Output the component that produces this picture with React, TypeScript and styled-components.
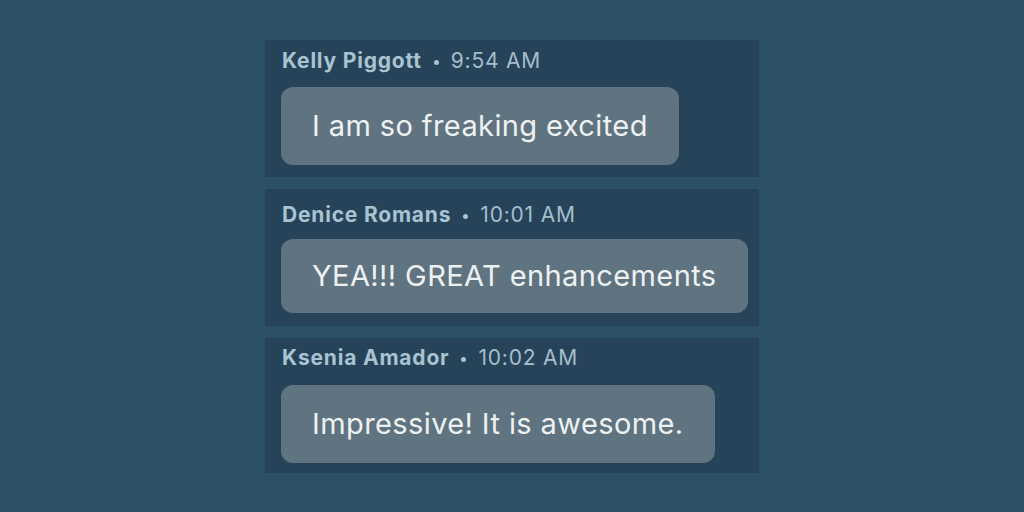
import React from "react";
import styled, { createGlobalStyle } from "styled-components";

const GlobalStyle = createGlobalStyle`
  html, body {
    margin: 0;
    padding: 0;
    background: #2c5166;
  }
  body {
    font-family: Inter, "Noto Sans", sans-serif;
    -webkit-font-smoothing: antialiased;
  }
`;

type Message = {
  name: string;
  time: string;
  text: string;
  top: number;
  bottom: number;
  gap: number;
  bubbleY: number;
};

const messages: Message[] = [
  { name: "Kelly Piggott", time: "9:54 AM", text: "I am so freaking excited", top: 9, bottom: 12, gap: 14, bubbleY: 25 },
  { name: "Denice Romans", time: "10:01 AM", text: "YEA!!! GREAT enhancements", top: 14, bottom: 13, gap: 12, bubbleY: 23 },
  { name: "Ksenia Amador", time: "10:02 AM", text: "Impressive! It is awesome.", top: 8, bottom: 10, gap: 15, bubbleY: 25 },
];

export default function App() {
  return (
    <>
      <GlobalStyle />
      <Page>
        <Feed>
          {messages.map((m) => (
            <Card key={m.name} $top={m.top} $bottom={m.bottom} $gap={m.gap}>
              <Header>
                <Name>{m.name}</Name>
                <Dot />
                <Time>{m.time}</Time>
              </Header>
              <Bubble $padY={m.bubbleY}>{m.text}</Bubble>
            </Card>
          ))}
        </Feed>
      </Page>
    </>
  );
}

const Page = styled.div`
  width: 1024px;
  height: 512px;
  display: flex;
  justify-content: center;
  padding-top: 40px;
  box-sizing: border-box;
`;

const Feed = styled.div`
  width: 494px;
  display: flex;
  flex-direction: column;
  gap: 12px;
`;

const Card = styled.div<{ $top: number; $bottom: number; $gap: number }>`
  background: #27435a;
  padding: ${(p) => p.$top}px 10px ${(p) => p.$bottom}px 17px;
  display: flex;
  flex-direction: column;
  align-items: flex-start;
  gap: ${(p) => p.$gap}px;
`;

const Header = styled.div`
  display: flex;
  align-items: center;
  gap: 12px;
  font-size: 21px;
  line-height: 24px;
  letter-spacing: 0.8px;
  color: #a8c4d0;
`;

const Name = styled.span`
  font-weight: 700;
`;

const Dot = styled.span`
  width: 5px;
  height: 5px;
  border-radius: 50%;
  background: #a8c4d0;
  margin-top: 2px;
`;

const Time = styled.span`
  font-weight: 400;
  color: #a4bfcc;
`;

const Bubble = styled.div<{ $padY: number }>`
  background: #5f7480;
  color: #eef1f2;
  border-radius: 12px;
  padding: ${(p) => p.$padY}px 31px;
  font-size: 29px;
  line-height: 28px;
  letter-spacing: 0.4px;
  white-space: nowrap;
  margin-left: -1px;
`;
